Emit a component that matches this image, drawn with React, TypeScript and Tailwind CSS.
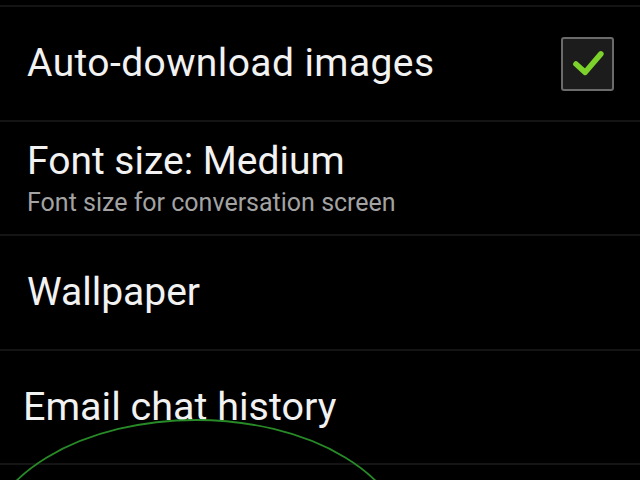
export default function App() {
  return (
    <div className="relative h-[480px] w-[640px] overflow-hidden bg-black font-['Roboto',sans-serif] text-white">
      <div className="h-[5px]" />
      <div className="h-[2px] bg-[#141414]" />

      <div className="flex h-[113px] items-center justify-between pl-[27px] pr-[26px]">
        <div className="text-[39px] leading-none tracking-[0.4px] text-[#f2f2f2]">Auto-download images</div>
        <div className="flex h-[54px] w-[53px] items-center justify-center rounded-[3px] border-2 border-[#6b6b6b] bg-[#1c1c1c]">
          <svg width="53" height="54" viewBox="0 0 53 54">
            <polyline
              points="14,27 24,36 41,16"
              fill="none"
              stroke="#7cd12b"
              strokeWidth="6"
              strokeLinecap="round"
              strokeLinejoin="round"
            />
          </svg>
        </div>
      </div>
      <div className="h-[2px] bg-[#141414]" />

      <div className="flex h-[112px] flex-col justify-center pl-[27px]">
        <div className="text-[39px] leading-none text-[#f2f2f2]">Font size: Medium</div>
        <div className="mt-[9px] text-[25px] leading-none text-[#a3a3a3]">Font size for conversation screen</div>
      </div>
      <div className="h-[2px] bg-[#141414]" />

      <div className="flex h-[113px] items-center pl-[27px]">
        <div className="text-[39px] leading-none text-[#f2f2f2]">Wallpaper</div>
      </div>
      <div className="h-[2px] bg-[#141414]" />

      <div className="flex h-[112px] items-center pl-[23px]">
        <div className="text-[39.5px] leading-none text-[#f2f2f2]">Email chat history</div>
      </div>
      <div className="h-[2px] bg-[#141414]" />

      <svg className="pointer-events-none absolute left-0 top-0" width="640" height="480" viewBox="0 0 640 480">
        <ellipse cx="196" cy="548" rx="211" ry="128" fill="none" stroke="#278a27" strokeWidth="1.8" />
      </svg>
    </div>
  );
}
